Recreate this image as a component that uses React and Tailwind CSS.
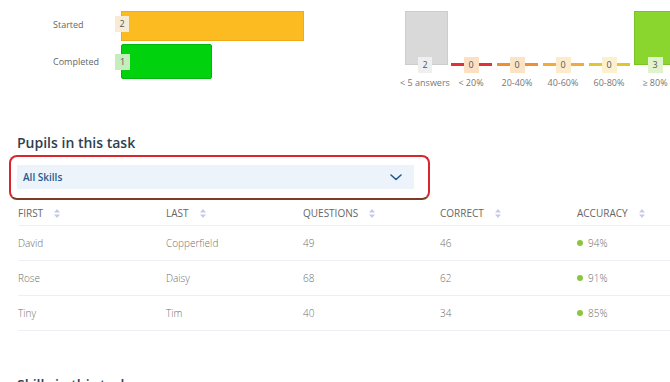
import React from "react";

function SortIcon() {
  return (
    <svg width="6" height="9" viewBox="0 0 6 9" className="ml-[11px]">
      <path d="M3 0 L6 3.5 L0 3.5 Z" fill="#c3cbe0" />
      <path d="M3 9 L6 5.5 L0 5.5 Z" fill="#c3cbe0" />
    </svg>
  );
}

const rows = [
  ["David", "Copperfield", "49", "46", "94%"],
  ["Rose", "Daisy", "68", "62", "91%"],
  ["Tiny", "Tim", "40", "34", "85%"],
];

function Seg({ color, badge, label }) {
  return (
    <div className="w-[46px] min-w-0 shrink-0 flex flex-col items-center">
      <div className="h-[54px]" />
      <div className="relative w-full h-[16px] flex items-center justify-center">
        <div className="absolute left-[3px] right-[2px] top-[6px] h-[3px]" style={{ background: color }} />
        <div className="relative w-[15px] h-[16px] flex items-center justify-center text-[9px] text-[#555]" style={{ background: badge }}>0</div>
      </div>
      <div className="mt-[3px] text-[9px] text-[#777] whitespace-nowrap">{label}</div>
    </div>
  );
}

export default function App() {
  return (
    <div className="w-[670px] h-[382px] overflow-hidden bg-white font-['Open_Sans',sans-serif]">
      <div className="flex h-[95px]">
        <div className="w-[402px] shrink-0 pt-[11px] pl-[53px] flex flex-col gap-[3px]">
          <div className="flex items-center h-[30px]">
            <div className="w-[68px] text-[9px] text-[#666] -mt-[2px]">Started</div>
            <div className="relative w-[183px] h-[30px] bg-[#fdbb22] border border-[#f0aa1a]">
              <div className="absolute left-[-7px] top-[4px] w-[14px] h-[16px] bg-[#f6ecd6] flex items-center justify-center text-[9px] text-[#555]">2</div>
            </div>
          </div>
          <div className="flex items-center h-[35px]">
            <div className="w-[68px] text-[9px] text-[#666]">Completed</div>
            <div className="relative w-[91px] h-[35px] bg-[#00d20e] border border-[#00b80c] rounded-[2px]">
              <div className="absolute left-[-7px] top-[9px] w-[15px] h-[16px] bg-[#c4eebd] flex items-center justify-center text-[9px] text-[#555]">1</div>
            </div>
          </div>
        </div>
        <div className="flex pt-[11px]">
          <div className="w-[46px] min-w-0 shrink-0 flex flex-col items-center">
            <div className="w-[43px] h-[54px] ml-[3px] bg-[#d9d9d9] border border-[#cdcdcd]" />
            <div className="relative -mt-[8px] w-[14px] h-[16px] bg-[#efefef] flex items-center justify-center text-[9px] text-[#555]">2</div>
            <div className="mt-[3px] text-[9px] text-[#777] whitespace-nowrap">&lt; 5 answers</div>
          </div>
          <div className="flex -mt-[8px]">
            <Seg color="#e0303a" badge="#fbe0c4" label="< 20%" />
            <Seg color="#ee8f33" badge="#fbe3c6" label="20-40%" />
            <Seg color="#f2ab3a" badge="#fdebcb" label="40-60%" />
            <Seg color="#e3c530" badge="#fcf0cf" label="60-80%" />
          </div>
          <div className="w-[46px] min-w-0 shrink-0 flex flex-col items-center">
            <div className="w-[45px] h-[54px] ml-[2px] bg-[#8ad52e] border border-[#7cc426]" />
            <div className="relative -mt-[8px] w-[15px] h-[16px] bg-[#e1f3cc] flex items-center justify-center text-[9px] text-[#555]">3</div>
            <div className="mt-[3px] text-[9px] text-[#777] whitespace-nowrap">≥ 80%</div>
          </div>
        </div>
      </div>

      <div className="pl-[17px] pt-[38px] text-[14px] font-semibold text-[#2e3f50] leading-[20px]">Pupils in this task</div>

      <div className="ml-[9px] mt-[2px] w-[421px] h-[45px] rounded-[8px] border-2 border-[#d9262c] border-b-[#7d3d22] pl-[6px] pr-[14px] pt-[8px]">
        <div className="h-[24px] bg-[#ecf3fb] flex items-center justify-between pl-[6px] pr-[12px]">
          <span className="text-[10px] font-semibold text-[#235a8c]">All Skills</span>
          <svg width="12" height="7" viewBox="0 0 12 7">
            <path d="M1 1 L6 5.5 L11 1" fill="none" stroke="#235a8c" strokeWidth="1.6" strokeLinecap="round" strokeLinejoin="round" />
          </svg>
        </div>
      </div>

      <div className="ml-[18px] mt-[1px]">
        <div className="flex items-center h-[25px] border-b border-[#eceff3] text-[10px] text-[#666]">
          <div className="w-[148px] flex items-center">FIRST<SortIcon /></div>
          <div className="w-[137px] flex items-center">LAST<SortIcon /></div>
          <div className="w-[137px] flex items-center">QUESTIONS<SortIcon /></div>
          <div className="w-[137px] flex items-center">CORRECT<SortIcon /></div>
          <div className="flex-1 flex items-center">ACCURACY<SortIcon /></div>
        </div>
        {rows.map((r) => (
          <div key={r[0]} className="flex items-center h-[35px] border-b border-[#eceff3] text-[10px] font-light text-[#6f6f6f]">
            <div className="w-[148px]">{r[0]}</div>
            <div className="w-[137px]">{r[1]}</div>
            <div className="w-[137px]">{r[2]}</div>
            <div className="w-[137px]">{r[3]}</div>
            <div className="flex-1 flex items-center">
              <span className="w-[6px] h-[6px] rounded-full bg-[#8cc63e] mr-[5px]" />
              {r[4]}
            </div>
          </div>
        ))}
      </div>

      <div className="pl-[17px] pt-[44px] text-[14px] font-semibold text-[#2e3f50] leading-[20px]">Skills in this task</div>
    </div>
  );
}
